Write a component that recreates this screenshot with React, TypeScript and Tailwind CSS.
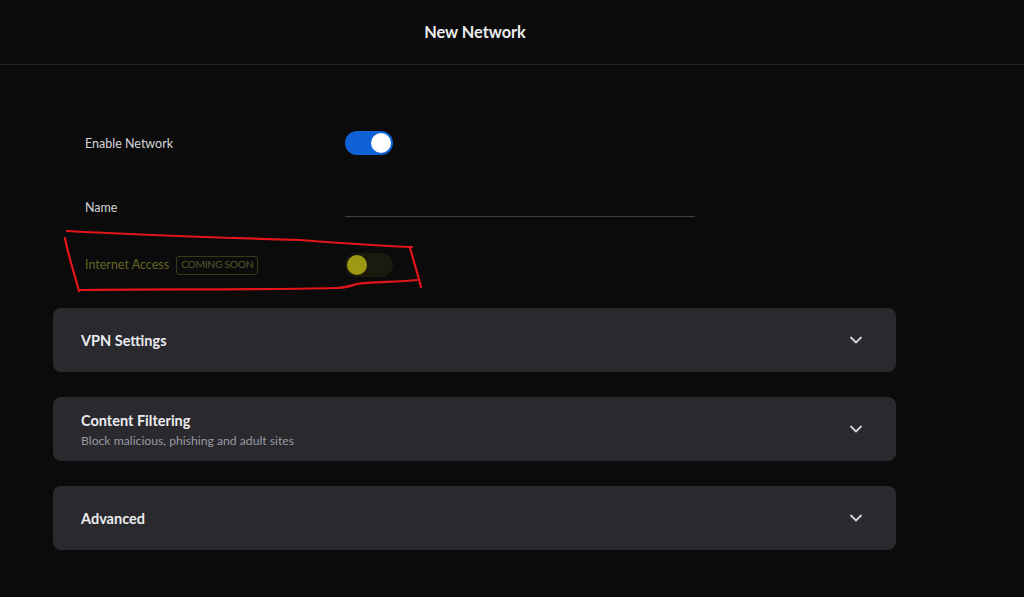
import React from "react";

function Chevron() {
  return (
    <svg width="16" height="16" viewBox="0 0 16 16" fill="none" className="text-[#d4d4d8]">
      <path d="M3 5.5 L8 10.5 L13 5.5" stroke="currentColor" strokeWidth="1.8" strokeLinecap="round" strokeLinejoin="round" />
    </svg>
  );
}

function Card({ title, sub }: { title: string; sub?: string }) {
  return (
    <div className="h-16 rounded-lg bg-[#29292e] flex items-center justify-between pl-7 pr-[32px]">
      <div className="flex flex-col pt-[2px]">
        <span className="text-[14.5px] font-bold text-[#ececee] leading-5">{title}</span>
        {sub && <span className="text-[12.2px] text-[#9a9aa0] leading-[19px]">{sub}</span>}
      </div>
      <Chevron />
    </div>
  );
}

export default function App() {
  return (
    <div className="relative w-full h-[597px] bg-[#0b0b0c] overflow-hidden" style={{ fontFamily: "Lato, 'Open Sans', sans-serif" }}>
      <div className="h-[65px] border-b border-[#242426] w-full">
        <div className="w-[950px] h-full flex items-center justify-center">
          <span className="text-[16.3px] font-bold text-[#ededee]">New Network</span>
        </div>
      </div>
      <div className="w-[950px] pl-[53px] pr-[54px]">
        <div className="pl-[32px] pt-[66px]">
          <div className="flex items-center h-6">
            <span className="w-[260px] text-[12.5px] text-[#d6d6d8] pt-[2px]">Enable Network</span>
            <div className="w-[48px] h-6 rounded-full bg-[#0f62d6] flex items-center justify-end pr-[2px]">
              <div className="w-5 h-5 rounded-full bg-white" />
            </div>
          </div>
          <div className="flex items-start h-6 mt-[41px]">
            <span className="w-[260px] h-6 flex items-center text-[12.5px] text-[#d6d6d8] pt-[1px]">Name</span>
            <div className="w-[350px] h-px bg-[#3f3f42] mt-[20px]" />
          </div>
          <div className="flex items-center h-6 mt-[33px]">
            <div className="w-[260px] flex items-center gap-[7px]">
              <span className="text-[12.5px] text-[#666428]">Internet Access</span>
              <span className="text-[10.3px] text-[#57552a] border border-[#3a391e] rounded-[3px] px-[4px] h-[19px] flex items-center tracking-[-0.3px]">COMING SOON</span>
            </div>
            <div className="w-[48px] h-6 rounded-full bg-[#1a1a0e] flex items-center pl-[2px]">
              <div className="w-5 h-5 rounded-full bg-[#9c9a12]" />
            </div>
          </div>
        </div>
        <div className="mt-[31px] flex flex-col gap-[25px]">
          <Card title="VPN Settings" />
          <Card title="Content Filtering" sub="Block malicious, phishing and adult sites" />
          <Card title="Advanced" />
        </div>
      </div>
      <svg className="absolute left-0 top-0 pointer-events-none" width="1024" height="597" fill="none">
        <path d="M67 231 C120 234 200 237 300 240 C340 243 380 246 412 247" stroke="#e3141a" strokeWidth="2.2" strokeLinecap="round" />
        <path d="M410 248 C414 262 418 275 421 287" stroke="#e3141a" strokeWidth="2.2" strokeLinecap="round" />
        <path d="M417 280 C395 282 370 282 357 284 C350 286 345 288 335 288 C250 290 150 289 79 290" stroke="#e3141a" strokeWidth="2.2" strokeLinecap="round" />
        <path d="M65 238 C68 255 74 272 79 291" stroke="#e3141a" strokeWidth="2.2" strokeLinecap="round" />
      </svg>
    </div>
  );
}
